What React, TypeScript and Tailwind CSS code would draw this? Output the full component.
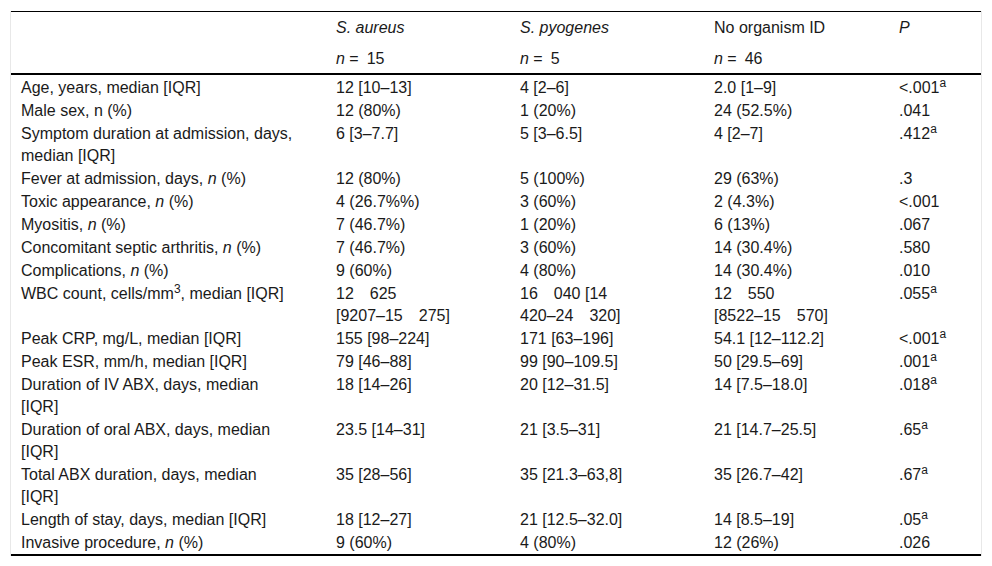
import type { ReactNode } from "react";

type Row = {
  label: ReactNode;
  a: ReactNode;
  b: ReactNode;
  c: ReactNode;
  p: string;
  sup?: boolean;
};

const N = () => <i>n</i>;

const rows: Row[] = [
  { label: "Age, years, median [IQR]", a: "12 [10–13]", b: "4 [2–6]", c: "2.0 [1–9]", p: "<.001", sup: true },
  { label: "Male sex, n (%)", a: "12 (80%)", b: "1 (20%)", c: "24 (52.5%)", p: ".041" },
  { label: <>Symptom duration at admission, days,<br />median [IQR]</>, a: "6 [3–7.7]", b: "5 [3–6.5]", c: "4 [2–7]", p: ".412", sup: true },
  { label: <>Fever at admission, days, <N /> (%)</>, a: "12 (80%)", b: "5 (100%)", c: "29 (63%)", p: ".3" },
  { label: <>Toxic appearance, <N /> (%)</>, a: "4 (26.7%%)", b: "3 (60%)", c: "2 (4.3%)", p: "<.001" },
  { label: <>Myositis, <N /> (%)</>, a: "7 (46.7%)", b: "1 (20%)", c: "6 (13%)", p: ".067" },
  { label: <>Concomitant septic arthritis, <N /> (%)</>, a: "7 (46.7%)", b: "3 (60%)", c: "14 (30.4%)", p: ".580" },
  { label: <>Complications, <N /> (%)</>, a: "9 (60%)", b: "4 (80%)", c: "14 (30.4%)", p: ".010" },
  {
    label: <>WBC count, cells/mm<sup className="text-[12px]">3</sup>, median [IQR]</>,
    a: <>12{"\u2003"}625<br />[9207–15{"\u2003"}275]</>,
    b: <>16{"\u2003"}040 [14<br />420–24{"\u2003"}320]</>,
    c: <>12{"\u2003"}550<br />[8522–15{"\u2003"}570]</>,
    p: ".055",
    sup: true,
  },
  { label: "Peak CRP, mg/L, median [IQR]", a: "155 [98–224]", b: "171 [63–196]", c: "54.1 [12–112.2]", p: "<.001", sup: true },
  { label: "Peak ESR, mm/h, median [IQR]", a: "79 [46–88]", b: "99 [90–109.5]", c: "50 [29.5–69]", p: ".001", sup: true },
  { label: <>Duration of IV ABX, days, median<br />[IQR]</>, a: "18 [14–26]", b: "20 [12–31.5]", c: "14 [7.5–18.0]", p: ".018", sup: true },
  { label: <>Duration of oral ABX, days, median<br />[IQR]</>, a: "23.5 [14–31]", b: "21 [3.5–31]", c: "21 [14.7–25.5]", p: ".65", sup: true },
  { label: <>Total ABX duration, days, median<br />[IQR]</>, a: "35 [28–56]", b: "35 [21.3–63,8]", c: "35 [26.7–42]", p: ".67", sup: true },
  { label: "Length of stay, days, median [IQR]", a: "18 [12–27]", b: "21 [12.5–32.0]", c: "14 [8.5–19]", p: ".05", sup: true },
  { label: <>Invasive procedure, <N /> (%)</>, a: "9 (60%)", b: "4 (80%)", c: "12 (26%)", p: ".026" },
];

export default function App() {
  return (
    <div className="min-h-screen bg-white pt-[11px] pl-[10px] font-['Liberation_Sans',Arial,sans-serif] text-[16px] leading-[22px] text-[#1a1a1a]">
      <table className="w-[972px] table-fixed border-separate border-spacing-0 border-x border-[#e8e8e8] text-left">
        <colgroup>
          <col className="w-[315px]" />
          <col className="w-[184px]" />
          <col className="w-[194px]" />
          <col className="w-[185px]" />
          <col className="w-[92px]" />
        </colgroup>
        <thead>
          <tr className="align-top">
            <th className="border-t border-black pt-[5px] pb-[4px]" />
            <th className="border-t border-black pt-[5px] pb-[4px] pl-[10px] font-normal italic">S. aureus</th>
            <th className="border-t border-black pt-[5px] pb-[4px] pl-[10px] font-normal italic">S. pyogenes</th>
            <th className="border-t border-black pt-[5px] pb-[4px] pl-[10px] font-normal">No organism ID</th>
            <th className="border-t border-black pt-[5px] pb-[4px] pl-[10px] font-normal italic">P</th>
          </tr>
          <tr className="align-top">
            <th className="border-b-2 border-black pt-[5px] pb-[3px]" />
            <th className="border-b-2 border-black pt-[5px] pb-[3px] pl-[10px] font-normal">
              <i>n</i> ={"\u2002"}15
            </th>
            <th className="border-b-2 border-black pt-[5px] pb-[3px] pl-[10px] font-normal">
              <i>n</i> ={"\u2002"}5
            </th>
            <th className="border-b-2 border-black pt-[5px] pb-[3px] pl-[10px] font-normal">
              <i>n</i> ={"\u2002"}46
            </th>
            <th className="border-b-2 border-black pt-[5px] pb-[3px]" />
          </tr>
        </thead>
        <tbody>
          {rows.map((r, i) => {
            const first = i === 0;
            const last = i === rows.length - 1;
            const cell = `${first ? "pt-[2px]" : "pt-[1px]"} ${last ? "border-b-2 border-black" : ""}`;
            return (
              <tr key={i} className="align-top">
                <td className={`${cell} pl-[10px] pr-[20px] whitespace-nowrap`}>{r.label}</td>
                <td className={`${cell} pl-[10px] whitespace-nowrap`}>{r.a}</td>
                <td className={`${cell} pl-[10px] whitespace-nowrap`}>{r.b}</td>
                <td className={`${cell} pl-[10px] whitespace-nowrap`}>{r.c}</td>
                <td className={`${cell} pl-[10px] whitespace-nowrap`}>
                  {r.p}
                  {r.sup && <sup className="text-[12px]">a</sup>}
                </td>
              </tr>
            );
          })}
        </tbody>
      </table>
    </div>
  );
}
